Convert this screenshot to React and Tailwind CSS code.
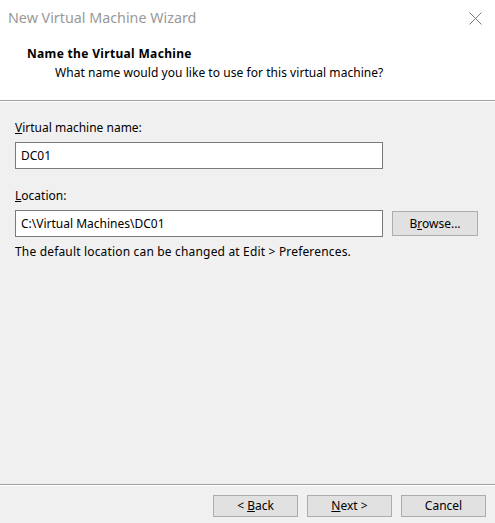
export default function App() {
  const font = { fontFamily: '"Noto Sans", "Open Sans", sans-serif' };
  return (
    <div className="w-[495px] h-[523px] flex flex-col bg-[#f0f0f0] text-[12px] text-black overflow-hidden" style={font}>
      <div className="bg-white h-[101px] border-b border-[#a0a0a0] flex flex-col shrink-0">
        <div className="h-[36px] flex items-center justify-between pl-[8px] pr-[13px]">
          <span className="text-[14.3px] text-[#999999] leading-none">New Virtual Machine Wizard</span>
          <svg width="13" height="13" viewBox="0 0 13 13" className="text-[#7a7a7a]">
            <path d="M0.5 0.5 L12.5 12.5 M12.5 0.5 L0.5 12.5" stroke="currentColor" strokeWidth="1" />
          </svg>
        </div>
        <div className="pl-[27px] pt-[10px] font-bold leading-[16px] tracking-[0.33px]">Name the Virtual Machine</div>
        <div className="pl-[55px] pt-[3px] leading-[16px] tracking-[0.05px]">What name would you like to use for this virtual machine?</div>
      </div>
      <div className="flex-1 px-[15px] pt-[18px] border-t border-white">
        <div className="leading-[16px]"><span className="underline">V</span>irtual machine name:</div>
        <div className="mt-[6px] w-[368px] h-[27px] bg-white border border-[#7a7a7a] flex items-center px-[5px]">DC01</div>
        <div className="mt-[19px] leading-[16px]"><span className="underline">L</span>ocation:</div>
        <div className="mt-[6px] flex items-center gap-[9px]">
          <div className="w-[368px] h-[27px] bg-white border border-[#7a7a7a] flex items-center px-[5px]">C:\Virtual Machines\DC01</div>
          <button className="w-[86px] h-[25px] bg-[#e1e1e1] border border-[#adadad] flex items-center justify-center">
            <span>B<span className="underline">r</span>owse...</span>
          </button>
        </div>
        <div className="mt-[7px] leading-[16px] tracking-[0.17px]">The default location can be changed at Edit &gt; Preferences.</div>
      </div>
      <div className="h-[39px] shrink-0 border-t border-[#a0a0a0] flex flex-col">
        <div className="border-t border-white flex justify-end gap-[9px] pr-[9px] pt-[9px]">
          <button className="w-[85px] h-[22px] bg-[#e1e1e1] border border-[#adadad] flex items-center justify-center">
            <span>&lt; <span className="underline">B</span>ack</span>
          </button>
          <button className="w-[85px] h-[22px] bg-[#e1e1e1] border border-[#adadad] flex items-center justify-center">
            <span><span className="underline">N</span>ext &gt;</span>
          </button>
          <button className="w-[85px] h-[22px] bg-[#e1e1e1] border border-[#adadad] flex items-center justify-center">
            <span>Cancel</span>
          </button>
        </div>
      </div>
    </div>
  );
}
